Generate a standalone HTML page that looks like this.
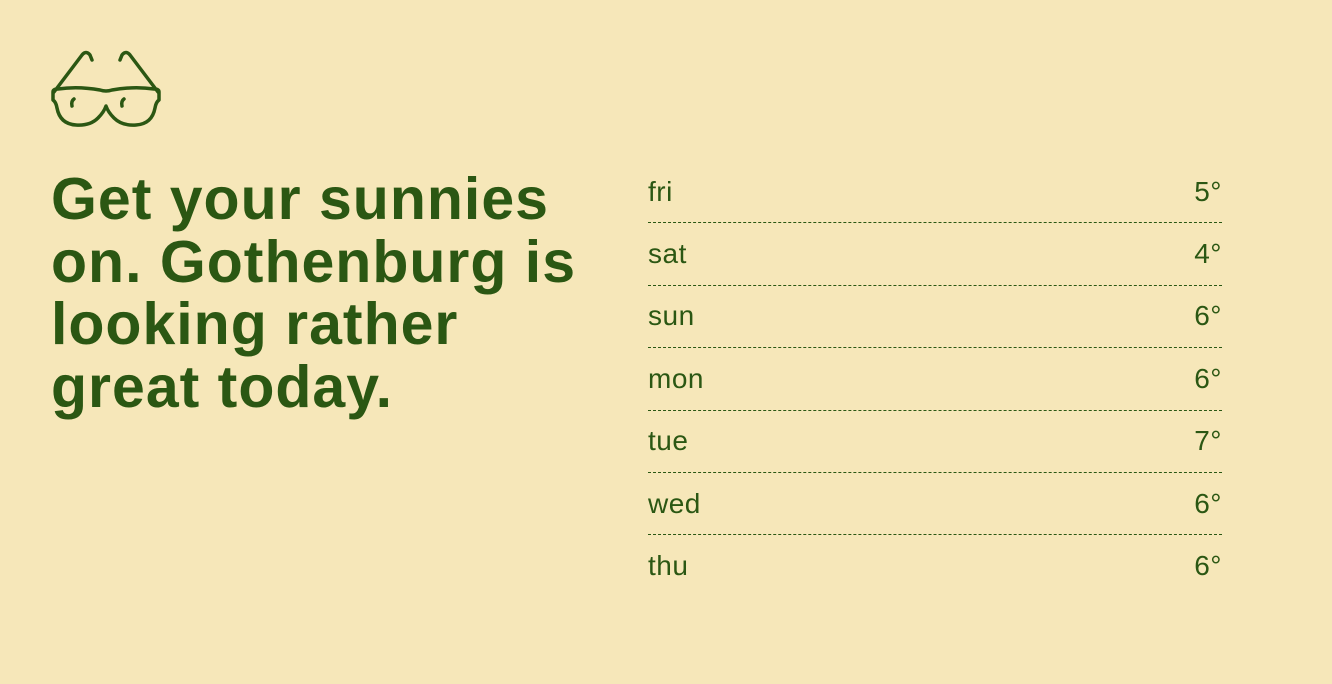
<!DOCTYPE html>
<html><head><meta charset="utf-8"><style>
html,body{margin:0;padding:0;background:#f6e7b9;width:1332px;height:684px;overflow:hidden}
body{position:relative;font-family:"Liberation Sans",sans-serif;color:#2b5713}
svg.g{position:absolute;left:50px;top:48px}
h1{position:absolute;left:51px;top:168px;margin:0;font-size:59px;line-height:62.7px;font-weight:bold;letter-spacing:1px;white-space:nowrap}
.list{position:absolute;left:648px;top:161px;width:574px}
.row{height:61.4px;border-bottom:1px dashed #2b5713;display:flex;justify-content:space-between;align-items:center;font-size:28px;letter-spacing:0.5px}
.row:last-child{border-bottom:none}
</style></head><body>
<svg class="g" width="114" height="82" viewBox="0 0 114 82" fill="none" stroke="#2b5713" stroke-width="3.5" stroke-linecap="round" stroke-linejoin="round">
<path d="M4 44 L32 7 Q36 2 40 7 L42 12"/>
<path d="M108 44 L80 7 Q76 2 72 7 L70 12"/>
<path d="M3 44 Q3 41 8 41 Q28 38 50 42 Q56 44 62 42 Q84 38 104 41 Q109 41 109 44 L109 52 Q106 54 105 60 Q102 76 86 77 Q72 78 64 70 Q58 64 56 58 Q54 64 48 70 Q40 78 26 77 Q10 76 7 60 Q6 54 3 52 Z"/>
<path d="M22 58 Q21 53 24 51"/>
<path d="M72 58 Q71 53 74 51"/>
</svg>
<h1>Get your sunnies<br>on. Gothenburg is<br>looking rather<br>great today.</h1>
<div class="list">
<div class="row"><span>fri</span><span>5°</span></div>
<div class="row"><span>sat</span><span>4°</span></div>
<div class="row"><span>sun</span><span>6°</span></div>
<div class="row"><span>mon</span><span>6°</span></div>
<div class="row"><span>tue</span><span>7°</span></div>
<div class="row"><span>wed</span><span>6°</span></div>
<div class="row"><span>thu</span><span>6°</span></div>
</div>
</body></html>
